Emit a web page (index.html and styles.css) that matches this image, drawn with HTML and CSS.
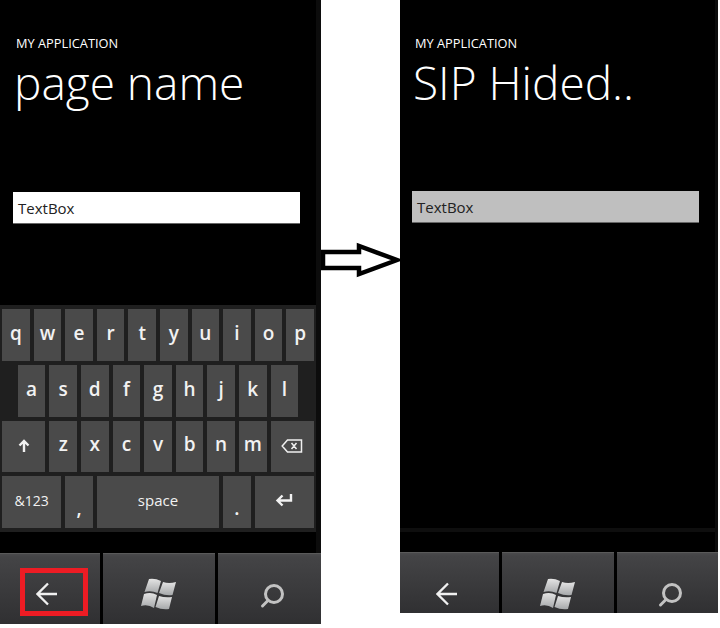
FILE: index.html
```html
<!DOCTYPE html>
<html lang="en">
<head>
    <meta charset="UTF-8">
    <meta name="viewport" content="width=device-width, initial-scale=1.0">
    <title>SIP Hided</title>
    <link rel="stylesheet" href="styles.css">
</head>
<body>
    <div class="page">
        <div class="phone phone-left">
            <div class="screen">
                <div class="app-name">MY APPLICATION</div>
                <h1 class="page-title">page name</h1>
                <div class="textbox">TextBox</div>
            </div>

            <div class="keyboard">
                <div class="key">q</div>
                <div class="key">w</div>
                <div class="key">e</div>
                <div class="key">r</div>
                <div class="key">t</div>
                <div class="key">y</div>
                <div class="key">u</div>
                <div class="key">i</div>
                <div class="key">o</div>
                <div class="key">p</div>

                <div class="key first-a">a</div>
                <div class="key">s</div>
                <div class="key">d</div>
                <div class="key">f</div>
                <div class="key">g</div>
                <div class="key">h</div>
                <div class="key">j</div>
                <div class="key">k</div>
                <div class="key">l</div>

                <div class="key wide-3 key-icon">
                    <svg width="14" height="14" viewBox="0 0 14 14"><path d="M7 13V2M2.5 6.5L7 2l4.500 4.500" fill="none" stroke="#f2f2f2" stroke-width="2.400"/></svg>
                </div>
                <div class="key">z</div>
                <div class="key">x</div>
                <div class="key">c</div>
                <div class="key">v</div>
                <div class="key">b</div>
                <div class="key">n</div>
                <div class="key">m</div>
                <div class="key wide-3 key-icon">
                    <svg width="22" height="14" viewBox="0 0 22 14"><path d="M20.500 1H6.500L1.200 7l5.300 6h14zM10.500 4l5 6M15.500 4l-5 6" fill="none" stroke="#f0f0f0" stroke-width="1.500"/></svg>
                </div>

                <div class="key wide-4 small">&amp;123</div>
                <div class="key low">,</div>
                <div class="key wide-8 small space">space</div>
                <div class="key low">.</div>
                <div class="key wide-4">
                    <svg width="18" height="14" viewBox="0 0 18 14"><path d="M16 1v6.500H3M7.500 2.500L2.500 7.500l5 5" fill="none" stroke="#f2f2f2" stroke-width="2.400"/></svg>
                </div>
            </div>

            <div class="nav">
                <div class="nav-btn btn-back">
                    <svg class="back-icon" width="22" height="24" viewBox="0 0 22 24"><path d="M21 12H2M12 1.500L1.500 12 12 22.500" fill="none" stroke="#f0f0f0" stroke-width="2.300"/></svg>
                    <div class="highlight"></div>
                </div>
                <div class="nav-btn btn-home">
                    <svg width="70" height="50" viewBox="0 0 70 50"><use href="#winlogo"/></svg>
                </div>
                <div class="nav-btn btn-search">
                    <svg width="26" height="28" viewBox="0 0 26 28"><use href="#searchicon"/></svg>
                </div>
            </div>
        </div>

        <div class="arrow">
            <svg width="79" height="40" viewBox="0 0 79 40"><path d="M2 12H38V6L76 20 38 34V28H2z" fill="#fff" stroke="#000" stroke-width="4.500"/></svg>
        </div>

        <div class="phone phone-right">
            <div class="screen">
                <div class="app-name">MY APPLICATION</div>
                <h1 class="page-title">SIP Hided..</h1>
                <div class="textbox">TextBox</div>
            </div>
            <div class="ghost-bar"></div>
            <div class="nav">
                <div class="nav-btn btn-back">
                    <svg class="back-icon" width="22" height="24" viewBox="0 0 22 24"><path d="M21 12H2M12 1.500L1.500 12 12 22.500" fill="none" stroke="#f0f0f0" stroke-width="2.300"/></svg>
                </div>
                <div class="nav-btn btn-home">
                    <svg width="70" height="50" viewBox="0 0 70 50"><use href="#winlogo"/></svg>
                </div>
                <div class="nav-btn btn-search">
                    <svg width="26" height="28" viewBox="0 0 26 28"><use href="#searchicon"/></svg>
                </div>
            </div>
        </div>
    </div>

    <svg class="defs" width="0" height="0">
        <defs>
            <linearGradient id="wingrad" x1="0" y1="0" x2="0" y2="1">
                <stop offset="0" stop-color="#e4e4e4"/>
                <stop offset="1" stop-color="#a6a8aa"/>
            </linearGradient>
            <g id="winlogo" fill="url(#wingrad)">
                <path d="M29 10Q35 9 41 12L37.500 24Q31 21 24.500 23z"/>
                <path d="M43 13Q49 15 56 13L52.500 26Q46 27 39 24z"/>
                <path d="M24 25Q31 22.500 37 26L34 39Q28 35 21 37z"/>
                <path d="M39 27Q45 29 52 28L49 40Q42 41 35.500 38z"/>
            </g>
            <g id="searchicon" fill="none" stroke="#c2c2c2" stroke-width="3">
                <circle cx="15" cy="11" r="8.500"/>
                <path d="M9 17.500L3.500 23" stroke-linecap="round"/>
            </g>
        </defs>
    </svg>
</body>
</html>
```

FILE: styles.css
```css
body {
    margin: 0;
    background: #fff;
    font-family: "Open Sans", "Noto Sans", sans-serif;
}
.page {
    display: flex;
    align-items: flex-start;
    width: 720px;
    height: 628px;
    overflow: hidden;
}
.defs {
    position: absolute;
}
.arrow {
    margin-top: 240px;
}
.phone {
    display: flex;
    flex-direction: column;
    background: #000;
}
.phone-left {
    width: 321px;
    height: 624px;
    box-shadow: inset -5px 0 0 #0c0c0c;
}
.phone-right {
    width: 318px;
    height: 613px;
    box-shadow: inset -3px 0 0 #0c0c0c;
}
.screen {
    height: 305px;
    color: #fff;
}
.app-name {
    font-size: 12.800px;
    line-height: 16px;
    padding-top: 35px;
}
.page-title {
    font-size: 46px;
    font-weight: 300;
    line-height: 56px;
    margin: 3px 0 0 -2px;
}
.textbox {
    height: 31px;
    line-height: 32px;
    font-size: 15px;
    color: #222;
    width: 282px;
    padding-left: 5px;
    border-bottom: 1px solid #666;
}
.phone-left .screen {
    padding-left: 16px;
}
.phone-left .textbox {
    background: #fff;
    margin: 82px 0 0 -3px;
}
.phone-right .screen {
    padding-left: 15px;
}
.phone-right .textbox {
    background: #bfbfbf;
    margin: 81px 0 0 -3px;
}
.keyboard {
    display: grid;
    grid-template-columns: repeat(20, 11.800px);
    grid-auto-rows: 51.800px;
    gap: 4px;
    width: 312px;
    height: 223px;
    padding: 4px 2px 0;
    background: #1f1f1f;
}
.key {
    grid-column: span 2;
    display: flex;
    align-items: center;
    justify-content: center;
    padding-bottom: 4px;
    box-sizing: border-box;
    background: #4a4a4a;
    color: #f2f2f2;
    font-size: 19px;
    font-weight: 600;
}
.key-icon {
    padding-bottom: 0;
}
.first-a {
    grid-column: 2 / span 2;
}
.wide-3 {
    grid-column: span 3;
}
.wide-4 {
    grid-column: span 4;
}
.wide-8 {
    grid-column: span 8;
}
.small {
    font-size: 14px;
    font-weight: 400;
}
.space {
    font-size: 15px;
}
.low {
    padding: 12px 0 0;
}
.ghost-bar {
    height: 4px;
    margin: 223px 3px 0 0;
    background: #0e0e0e;
}
.nav {
    display: flex;
    gap: 3px;
}
.phone-left .nav {
    height: 71px;
    margin-top: 21px;
}
.phone-right .nav {
    height: 61px;
    margin-top: 20px;
}
.nav-btn {
    position: relative;
    display: flex;
    justify-content: center;
    background: linear-gradient(#4a4a4c 0, #444446 3px, #303032 100%);
    border-top: 1px solid #5a5a5a;
    box-sizing: border-box;
}
.btn-back {
    width: 100px;
    padding: 28px 6px 0 0;
}
.btn-home {
    width: 112px;
    padding: 15px 8px 0 0;
}
.btn-search {
    flex: 1;
    padding: 29px 0 0 5px;
}
.phone-right .btn-back {
    width: 99px;
    padding-top: 29px;
}
.phone-right .btn-home {
    width: 112px;
    padding-top: 16px;
}
.phone-right .btn-search {
    padding-top: 29px;
}
.highlight {
    position: absolute;
    left: 20px;
    top: 14px;
    width: 58px;
    height: 38px;
    border: 5px solid #ed1c24;
}
```
